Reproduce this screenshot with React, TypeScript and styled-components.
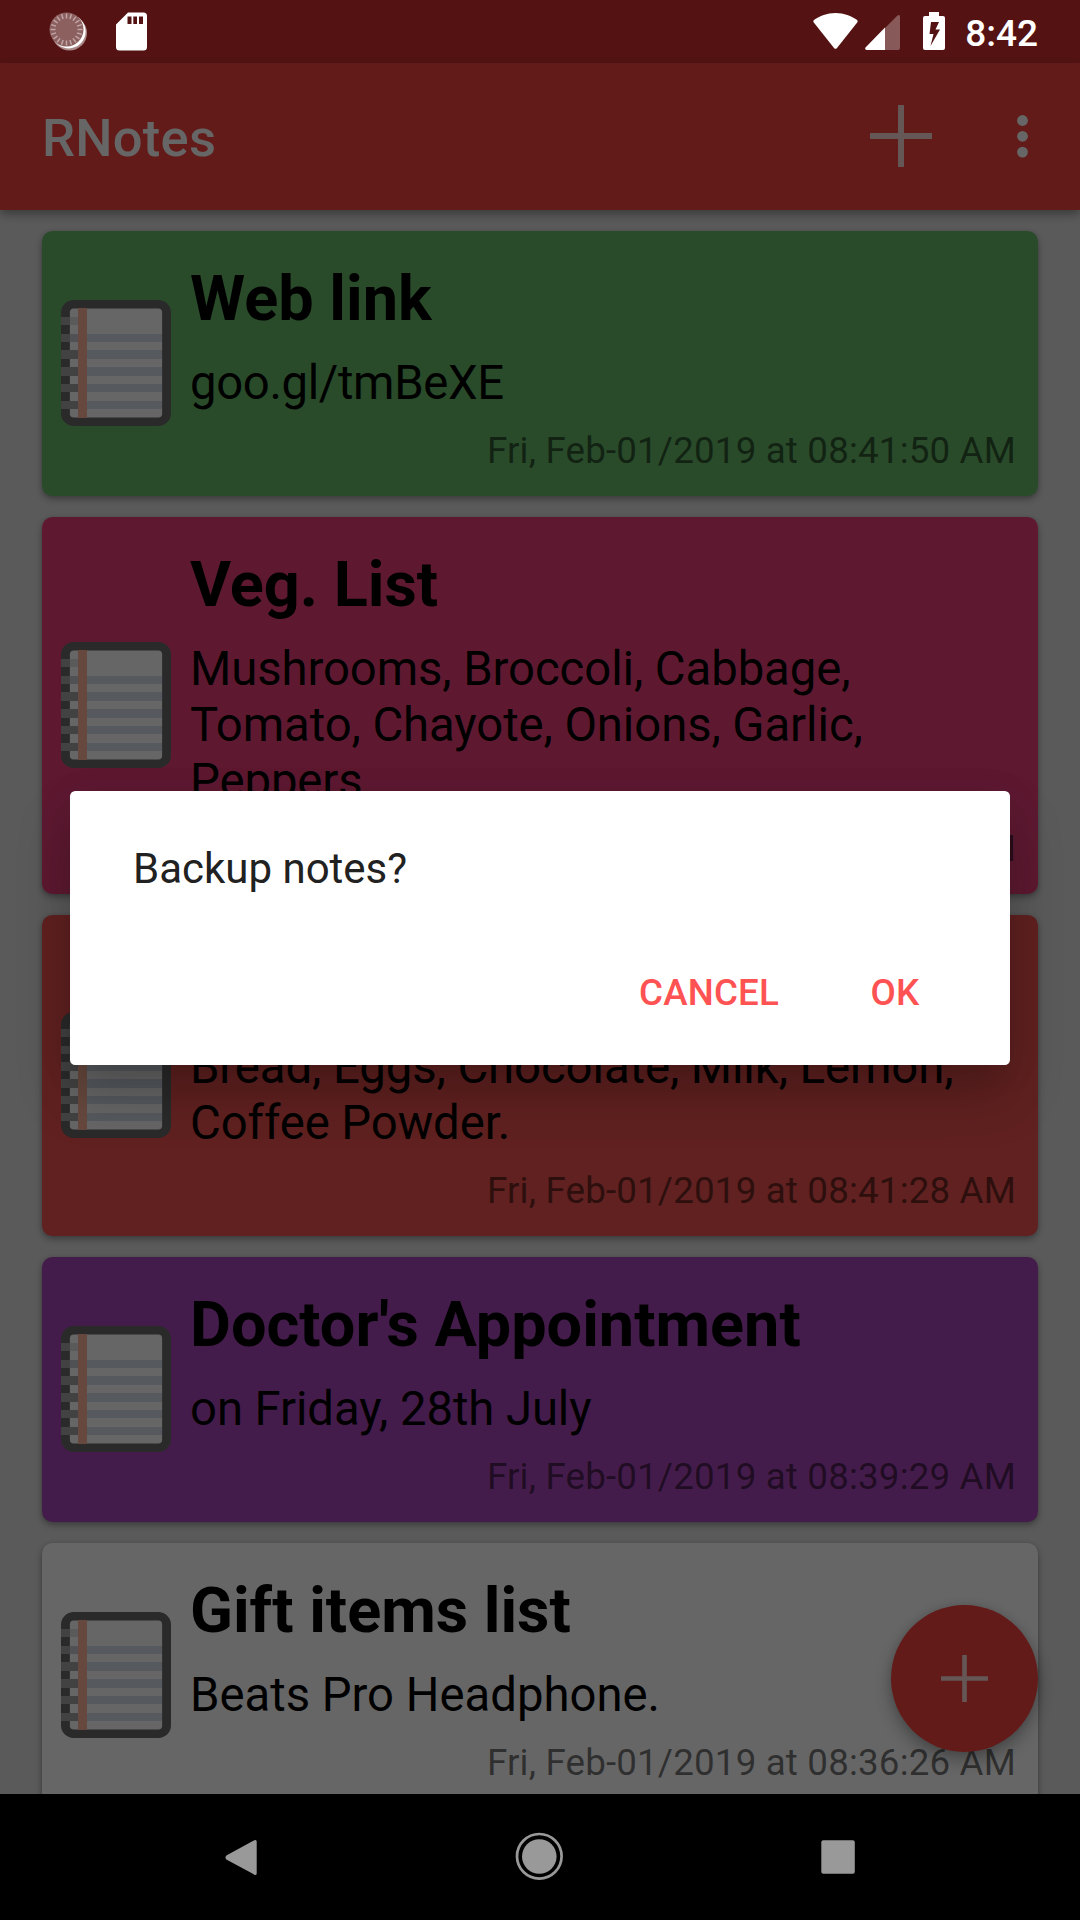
import React from "react";
import styled, { createGlobalStyle } from "styled-components";

const GlobalStyle = createGlobalStyle`
  *, *::before, *::after { box-sizing: border-box; }
  html, body { margin: 0; padding: 0; background: #000; }
  body { font-family: Roboto, "Noto Sans", sans-serif; }
  svg { display: block; flex: none; }
`;

const Screen = styled.div`
  position: relative;
  display: flex;
  flex-direction: column;
  width: 1080px;
  height: 1920px;
  overflow: hidden;
  background: #e1e1e1;
`;

const StatusBar = styled.header`
  display: flex;
  flex: none;
  justify-content: space-between;
  height: 63px;
  padding: 0 42px 0 48px;
  background: #d32f2f;
`;

const StatusGroup = styled.div`
  position: relative;
  z-index: 3;
  display: flex;
  align-items: flex-start;
`;

const Clock = styled.span`
  margin-left: 20px;
  padding-top: 12px;
  color: #fff;
  font-size: 37px;
  font-weight: 500;
  line-height: 43px;
`;

const AppBar = styled.div`
  position: relative;
  z-index: 1;
  display: flex;
  flex: none;
  align-items: center;
  height: 147px;
  padding: 0 51px 0 42px;
  background: #f4443c;
  box-shadow: 0 4px 10px rgba(0, 0, 0, 0.36);
`;

const AppTitle = styled.h1`
  flex: 1;
  margin: 2px 0 0;
  color: #fff;
  font-size: 52.5px;
  font-weight: 500;
  letter-spacing: 0.25px;
  line-height: 62px;
`;

const AppActions = styled.div`
  display: flex;
  align-items: center;
  gap: 84px;
  margin-bottom: 1px;
`;

const NoteList = styled.main`
  display: flex;
  flex: 1;
  flex-direction: column;
  gap: 21px;
  min-height: 0;
  padding: 21px 42px 0;
  overflow: hidden;
`;

const NoteCard = styled.article<{ $color: string }>`
  display: flex;
  flex: none;
  align-items: center;
  gap: 19px;
  padding: 30px 22px 24px 19px;
  border-radius: 10.5px;
  background: ${(p) => p.$color};
  box-shadow: 0 3px 7px rgba(0, 0, 0, 0.34), 0 0 4px rgba(0, 0, 0, 0.06);
`;

const NoteIconSlot = styled.div`
  margin-bottom: 7px;
`;

const NoteText = styled.div`
  display: flex;
  flex: 1;
  flex-direction: column;
  min-width: 0;
`;

const NoteTitle = styled.h2`
  min-height: 74px;
  margin: 1px 0 0;
  color: #000;
  font-size: 63px;
  font-weight: 700;
  line-height: 74px;
`;

const NoteBody = styled.p<{ $tracking: number }>`
  margin: 19px 0 18px;
  color: #000;
  font-size: 47.25px;
  letter-spacing: ${(p) => p.$tracking}px;
  line-height: 56px;
  white-space: pre;
`;

const NoteTime = styled.time`
  color: rgba(0, 0, 0, 0.54);
  font-size: 36.75px;
  letter-spacing: 0.16px;
  line-height: 43px;
  text-align: right;
`;

const Fab = styled.button`
  position: absolute;
  right: 42px;
  bottom: 168px;
  display: flex;
  align-items: center;
  justify-content: center;
  width: 147px;
  height: 147px;
  padding: 0;
  border: 0;
  border-radius: 50%;
  background: #f4443c;
  box-shadow: 0 8px 18px rgba(0, 0, 0, 0.3), 0 0 8px rgba(0, 0, 0, 0.1);
`;

const Scrim = styled.div`
  position: absolute;
  inset: 0;
  z-index: 2;
  display: flex;
  align-items: center;
  justify-content: center;
  padding: 62px 0 126px;
  background: rgba(0, 0, 0, 0.6);
`;

const Dialog = styled.section`
  display: flex;
  flex-direction: column;
  justify-content: space-between;
  width: 940px;
  height: 274px;
  padding: 53px 31px 42px 63px;
  border-radius: 5.25px;
  background: #fff;
  box-shadow: 0 30px 54px rgba(0, 0, 0, 0.22), 0 6px 36px rgba(0, 0, 0, 0.08);
`;

const DialogMessage = styled.p`
  margin: 0;
  color: #212121;
  font-size: 42px;
  line-height: 49px;
`;

const DialogActions = styled.div`
  display: flex;
  justify-content: flex-end;
  gap: 21px;
`;

const DialogButton = styled.button<{ $width: number }>`
  width: ${(p) => p.$width}px;
  height: 62px;
  padding: 0;
  border: 0;
  background: none;
  color: #ff5252;
  font-family: inherit;
  font-size: 36.75px;
  font-weight: 500;
  letter-spacing: 0.15px;
  text-align: center;
`;

const NavBar = styled.nav`
  position: relative;
  z-index: 3;
  display: flex;
  flex: none;
  align-items: center;
  justify-content: space-between;
  height: 126px;
  padding: 0 210px;
  background: #000;
`;

function PlusIcon({ size, stroke }: { size: number; stroke: number }) {
  const c = size / 2;
  return (
    <svg width={size} height={size} viewBox={`0 0 ${size} ${size}`}>
      <path
        d={`M${c} 0V${size}M0 ${c}H${size}`}
        stroke="#fff"
        strokeOpacity="0.8"
        strokeWidth={stroke}
        fill="none"
      />
    </svg>
  );
}

function MoreIcon() {
  return (
    <svg width="13" height="44" viewBox="0 0 13 44" fill="#fff">
      <circle cx="6.5" cy="6.5" r="5.4" />
      <circle cx="6.5" cy="22.3" r="5.4" />
      <circle cx="6.5" cy="38.1" r="5.4" />
    </svg>
  );
}

function NotebookIcon() {
  const rows = [4, 6, 8, 10, 12];
  return (
    <svg width="110" height="126" viewBox="0 0 13 15" preserveAspectRatio="none">
      <rect width="13" height="15" rx="1.5" fill="#696969" />
      <rect x="1.05" y="1" width="10.9" height="13" rx="0.45" fill="#fff" />
      <g shapeRendering="crispEdges">
        {rows.map((y) => (
          <rect key={y} x="1.05" y={y} width="10.9" height="1" fill="#d7dfeb" />
        ))}
        <rect y="2" width="1.05" height="1" fill="#a5a5a5" />
        <rect x="1.05" y="2" width="1" height="1" fill="#e1e1e1" />
        <rect y="4" width="1.05" height="1" fill="#a5a5a5" />
        <rect x="1.05" y="4" width="1" height="1" fill="#c8cad2" />
        {rows.slice(1).map((y) => (
          <rect key={y} y={y} width="2.05" height="1" fill="#a5a5a5" />
        ))}
        <rect x="2" y="1" width="1.05" height="13" fill="#ffb59b" />
      </g>
    </svg>
  );
}

function SyncDotIcon() {
  const ticks = Array.from({ length: 20 }, (_, i) => i * 18);
  return (
    <svg width="42" height="63" viewBox="0 0 42 63">
      <circle cx="21.5" cy="33" r="17.5" fill="#fff" opacity="0.5" />
      <circle cx="20.6" cy="31.4" r="17" fill="#fff" />
      <circle cx="18.5" cy="29.5" r="17" fill="#8d6060" />
      <g stroke="#c2a9a9" strokeWidth="1.4">
        {ticks.map((a) => (
          <path key={a} d="M18.5 13.5V18.5" transform={`rotate(${a} 18.5 29.5)`} />
        ))}
      </g>
    </svg>
  );
}

const SdCardSvg = styled.svg`
  margin-left: 26px;
`;

function SdCardIcon() {
  return (
    <SdCardSvg width="32" height="63" viewBox="0 0 32 63">
      <path
        fill="#fff"
        fillRule="evenodd"
        d="M12 12.5H27.5Q31 12.5 31 16V47Q31 50.5 27.5 50.5H3.5Q0 50.5 0 47V24.5ZM11.5 16.5V24H15.5V16.5ZM17.3 16.5V24H21V16.5ZM23 16.5V24H27V16.5Z"
      />
    </SdCardSvg>
  );
}

function WifiIcon() {
  return (
    <svg width="45" height="63" viewBox="0 0 45 63">
      <path
        fill="#fff"
        d="M22.5 13C31 13 38.5 16 43.8 19.8Q45.3 21 44.2 22.5L24 48Q22.5 49.7 21 48L.8 22.5Q-.3 21 1.2 19.8C6.5 16 14 13 22.5 13Z"
      />
    </svg>
  );
}

const SignalSvg = styled.svg`
  margin-left: 7px;
`;

function SignalIcon() {
  return (
    <SignalSvg width="36" height="63" viewBox="0 0 36 63">
      <path fill="#fff" opacity="0.3" d="M20 28L32.5 15.6Q35 14 35 17V48Q35 50 33 50H20Z" />
      <path fill="#fff" d="M20 27.5V50H1.5Q-.5 49.5 .5 47.5Z" />
    </SignalSvg>
  );
}

const BatterySvg = styled.svg`
  margin-left: 22px;
`;

function BatteryIcon() {
  return (
    <BatterySvg width="22" height="63" viewBox="0 0 22 63">
      <path
        fill="#fff"
        fillRule="evenodd"
        d="M6 12H16V16H20Q22 16 22 18V48Q22 50 20 50H2Q0 50 0 48V18Q0 16 2 16H6ZM8 22L6.5 34H10.5L7.5 46L17 29.5H12.5L16 22Z"
      />
    </BatterySvg>
  );
}

function BackIcon() {
  return (
    <svg width="62" height="62" viewBox="0 0 62 62">
      <path
        fill="#999"
        stroke="#999"
        strokeWidth="3"
        strokeLinejoin="round"
        d="M45.2 15.5V47.5Q45.2 47.5 44.5 47L17.5 32.5Q16.5 31.5 17.5 30.5L44.5 15.9Z"
      />
    </svg>
  );
}

function HomeIcon() {
  return (
    <svg width="62" height="62" viewBox="0 0 62 62">
      <circle cx="30.3" cy="30.3" r="22.3" fill="none" stroke="#999" strokeWidth="2.7" />
      <circle cx="30.3" cy="30.5" r="17.3" fill="#999" />
    </svg>
  );
}

function RecentsIcon() {
  return (
    <svg width="62" height="62" viewBox="0 0 62 62">
      <rect x="13.3" y="14.3" width="33.5" height="33.5" rx="2" fill="#999" />
    </svg>
  );
}

interface Note {
  color: string;
  title: string;
  body: string;
  time: string;
  tracking: number;
}

const notes: Note[] = [
  {
    color: "#66bb6a",
    title: "Web link",
    body: "goo.gl/tmBeXE",
    time: "Fri, Feb-01/2019 at 08:41:50 AM",
    tracking: -0.35,
  },
  {
    color: "#ec407a",
    title: "Veg. List",
    body: "Mushrooms, Broccoli, Cabbage,\nTomato, Chayote, Onions, Garlic,\nPeppers",
    time: "Fri, Feb-01/2019 at 08:41:40 AM",
    tracking: -0.07,
  },
  {
    color: "#ef5350",
    title: "",
    body: "Bread, Eggs, Chocolate, Milk, Lemon,\nCoffee Powder.",
    time: "Fri, Feb-01/2019 at 08:41:28 AM",
    tracking: -0.07,
  },
  {
    color: "#ab47bc",
    title: "Doctor's Appointment",
    body: "on Friday, 28th July",
    time: "Fri, Feb-01/2019 at 08:39:29 AM",
    tracking: -0.07,
  },
  {
    color: "#ffffff",
    title: "Gift items list",
    body: "Beats Pro Headphone.",
    time: "Fri, Feb-01/2019 at 08:36:26 AM",
    tracking: 0,
  },
];

export default function App() {
  return (
    <>
      <GlobalStyle />
      <Screen>
        <StatusBar>
          <StatusGroup>
            <SyncDotIcon />
            <SdCardIcon />
          </StatusGroup>
          <StatusGroup>
            <WifiIcon />
            <SignalIcon />
            <BatteryIcon />
            <Clock>8:42</Clock>
          </StatusGroup>
        </StatusBar>
        <AppBar>
          <AppTitle>RNotes</AppTitle>
          <AppActions>
            <PlusIcon size={62} stroke={6} />
            <MoreIcon />
          </AppActions>
        </AppBar>
        <NoteList>
          {notes.map((note) => (
            <NoteCard key={note.color} $color={note.color}>
              <NoteIconSlot>
                <NotebookIcon />
              </NoteIconSlot>
              <NoteText>
                <NoteTitle>{note.title}</NoteTitle>
                <NoteBody $tracking={note.tracking}>{note.body}</NoteBody>
                <NoteTime>{note.time}</NoteTime>
              </NoteText>
            </NoteCard>
          ))}
        </NoteList>
        <Fab aria-label="Add note">
          <PlusIcon size={47} stroke={4.6} />
        </Fab>
        <NavBar>
          <BackIcon />
          <HomeIcon />
          <RecentsIcon />
        </NavBar>
        <Scrim>
          <Dialog role="dialog">
            <DialogMessage>Backup notes?</DialogMessage>
            <DialogActions>
              <DialogButton $width={162}>CANCEL</DialogButton>
              <DialogButton $width={168}>OK</DialogButton>
            </DialogActions>
          </Dialog>
        </Scrim>
      </Screen>
    </>
  );
}
